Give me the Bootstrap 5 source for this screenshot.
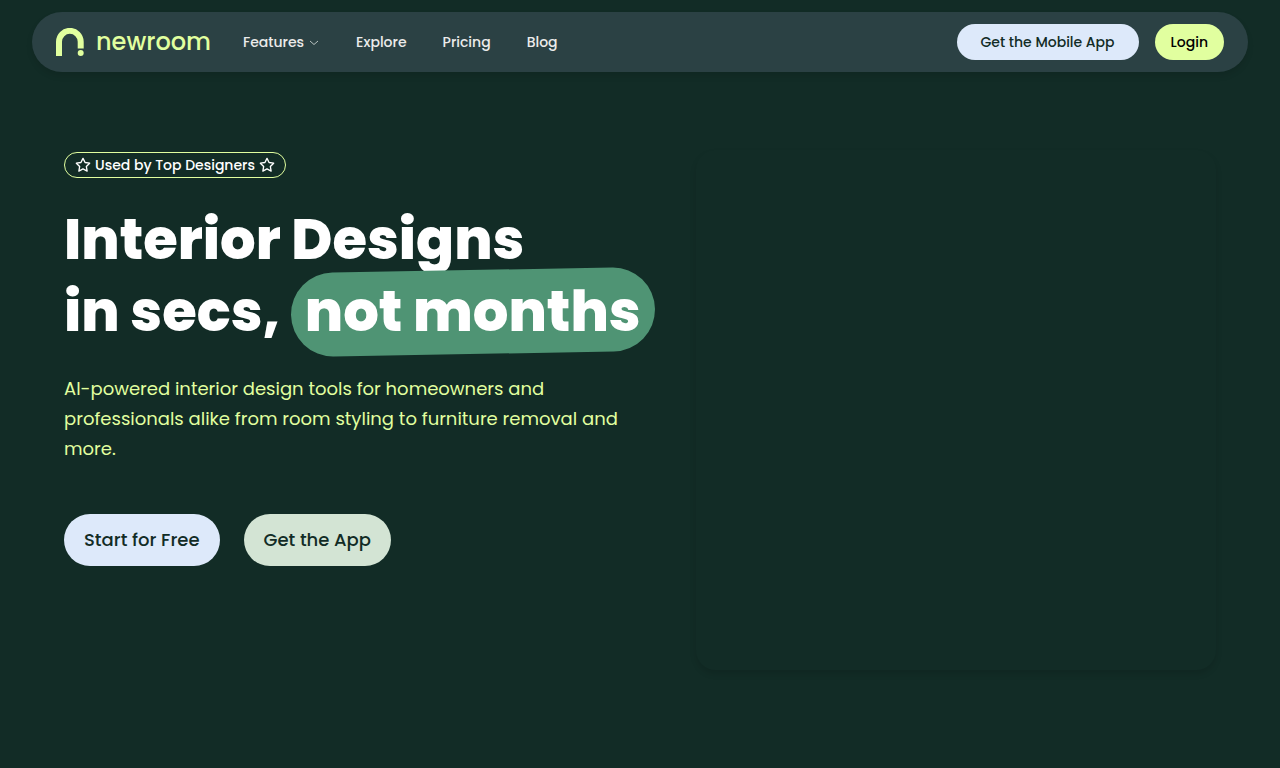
<!DOCTYPE html>
<html lang="en">
<head>
<meta charset="utf-8">
<meta name="viewport" content="width=device-width, initial-scale=1">
<title>newroom</title>
<link href="https://cdn.jsdelivr.net/npm/bootstrap@5.3.0/dist/css/bootstrap.min.css" rel="stylesheet">
<style>
:root { --forest:#122c26; --slate:#2b4144; --lime:#e1ff9f; --ice:#dde9fa; --sage:#d3e4d4; --mint:#4f9474; }
body { background:var(--forest); color:#fff; font-family:Poppins, Inter, "Open Sans", sans-serif; }
.site-header { padding-top:12px; }
.site-nav { background:var(--slate); min-height:60px; box-shadow:0 4px 6px rgba(0,0,0,.1); }
.brand-name { color:var(--lime); font-size:24px; line-height:36px; font-weight:500; }
.site-nav .navbar-nav .nav-link { color:#ebebeb; font-size:14px; line-height:20px; font-weight:500; padding:0; }
.nav-items { gap:36px; margin-left:32px; }
.pill { border:0; border-radius:50rem; font-weight:500; color:var(--forest); }
.pill-sm { font-size:14px; line-height:20px; padding:8px 16px; }
.pill-wide { padding-left:24px; padding-right:24px; }
.pill-lg { font-size:18px; line-height:28px; padding:12px 20px; }
.pill-ice, .pill-ice:hover { background:var(--ice); color:var(--forest); }
.pill-lime, .pill-lime:hover { background:var(--lime); color:#000; }
.pill-sage, .pill-sage:hover { background:var(--sage); color:var(--forest); }
.hero { padding:78px 64px; }
.hero-copy { padding-top:2px; }
.tagline { border:1px solid var(--lime); font-size:14px; line-height:20px; font-weight:500; padding:2px 10px; gap:4px; }
.hero h1 { font-size:56px; line-height:72px; font-weight:800; margin:24px 0 26px; }
.highlight { position:relative; z-index:0; display:inline-block; padding:0 14px; white-space:nowrap; }
.highlight::before { content:""; position:absolute; inset:-6px 0; z-index:-1; border-radius:50rem; background:var(--mint); transform:rotate(-1deg); }
.pitch { color:var(--lime); font-size:18px; line-height:30px; font-weight:400; max-width:580px; }
.hero-actions { gap:24px; margin-top:50px; }
.hero-media { flex:0 0 45.1%; aspect-ratio:1; border-radius:20px; box-shadow:0 4px 6px rgba(0,0,0,.12); }
</style>
</head>
<body>
<header class="site-header px-4 mx-2">
  <nav class="site-nav navbar navbar-expand rounded-pill px-4 py-0" aria-label="Main">
    <a class="d-flex align-items-center text-decoration-none" href="#">
      <svg width="28" height="28" viewBox="0 0 28 28" class="me-2" aria-hidden="true"><path d="M3 28V13.700a10.700 10.700 0 0 1 21.700 0V20.500" fill="none" stroke="#e1ff9f" stroke-width="6"/><circle cx="24.700" cy="25" r="3" fill="#e1ff9f"/></svg>
      <span class="brand-name ms-1">newroom</span>
    </a>
    <div class="navbar-nav nav-items">
      <a class="nav-link d-flex align-items-center" href="#">Features
        <svg class="ms-1" width="12" height="12" viewBox="0 0 12 12" fill="none" stroke="#b8c2c0" aria-hidden="true"><path d="M2 5l4 3.500L10 5"/></svg></a>
      <a class="nav-link" href="#">Explore</a>
      <a class="nav-link" href="#">Pricing</a>
      <a class="nav-link" href="#">Blog</a>
    </div>
    <div class="d-flex gap-3 ms-auto">
      <button type="button" class="btn pill pill-sm pill-wide pill-ice">Get the Mobile App</button>
      <button type="button" class="btn pill pill-sm pill-lime">Login</button>
    </div>
  </nav>
</header>
<main class="hero d-flex justify-content-between">
  <section class="hero-copy">
    <div class="tagline d-inline-flex align-items-center rounded-pill">
      <svg width="16" height="16" viewBox="0 0 24 24" fill="none" stroke="#fff" stroke-width="2" stroke-linejoin="round" aria-hidden="true"><path d="M12 2l3.100 6.300 6.900 1-5 4.900 1.200 6.900L12 17.800l-6.200 3.300L7 14.200 2 9.300l6.900-1z"/></svg>
      <span>Used by Top Designers</span>
      <svg width="16" height="16" viewBox="0 0 24 24" fill="none" stroke="#fff" stroke-width="2" stroke-linejoin="round" aria-hidden="true"><path d="M12 2l3.100 6.300 6.900 1-5 4.900 1.200 6.900L12 17.800l-6.200 3.300L7 14.200 2 9.300l6.900-1z"/></svg>
    </div>
    <h1>Interior Designs<br>in secs, <span class="highlight">not months</span></h1>
    <p class="pitch mb-0">AI-powered interior design tools for homeowners and professionals alike from room styling to furniture removal and more.</p>
    <div class="hero-actions d-flex">
      <button type="button" class="btn pill pill-lg pill-ice">Start for Free</button>
      <button type="button" class="btn pill pill-lg pill-sage">Get the App</button>
    </div>
  </section>
  <div class="hero-media"></div>
</main>
<script src="https://cdn.jsdelivr.net/npm/bootstrap@5.3.0/dist/js/bootstrap.bundle.min.js"></script>
</body>
</html>
